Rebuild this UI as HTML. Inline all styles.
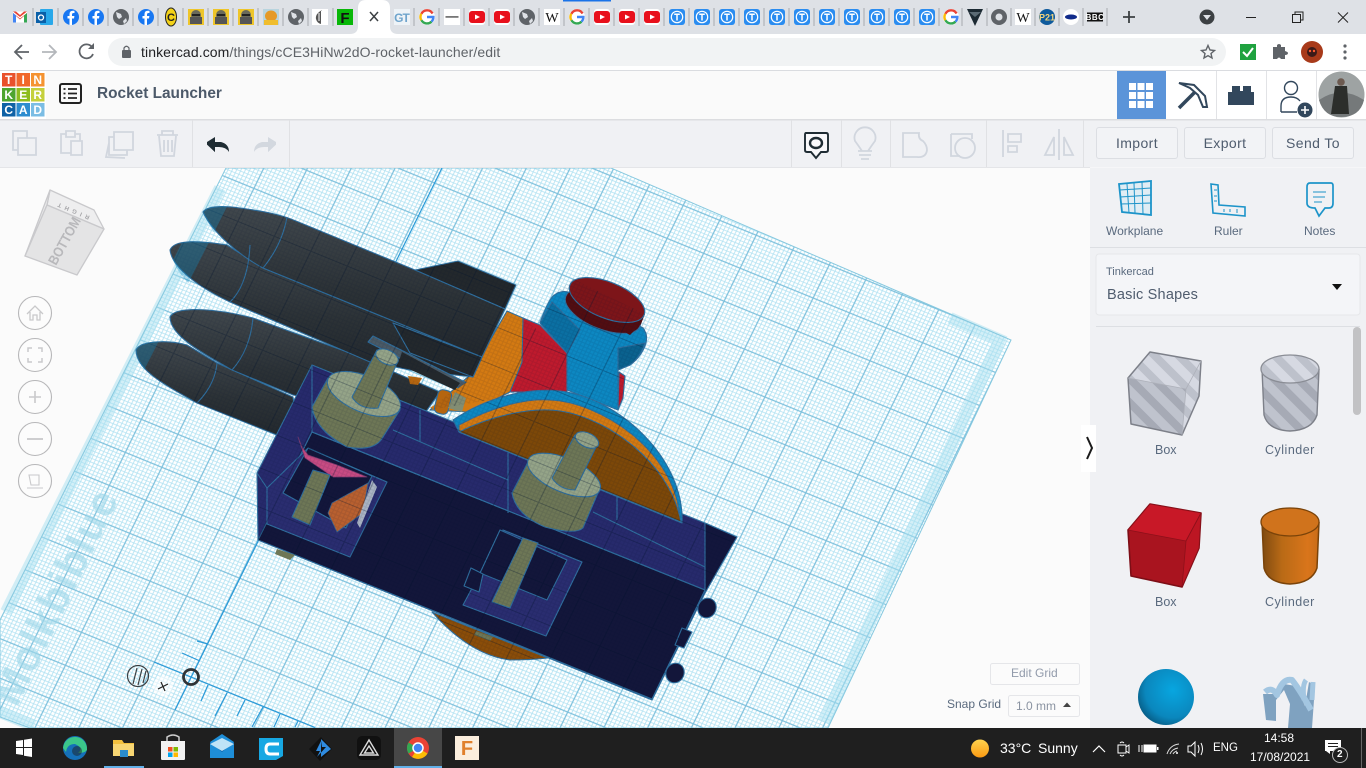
<!DOCTYPE html>
<html><head><meta charset="utf-8"><title>Rocket Launcher</title>
<style>
html,body{margin:0;padding:0;width:1366px;height:768px;overflow:hidden;background:#fbfbfb;font-family:"Liberation Sans",sans-serif}
svg{position:absolute;left:0;top:0}
.t{position:absolute;white-space:nowrap;line-height:1}
.btn{position:absolute;top:127px;height:30px;width:80px;border:1px solid #dcdee3;border-radius:3px;background:#f2f3f6;color:#4f5c6e;font-size:14px;line-height:30px;text-align:center;letter-spacing:.4px;box-sizing:content-box}
</style></head><body>
<svg width="1366" height="768" viewBox="0 0 1366 768" xmlns="http://www.w3.org/2000/svg" font-family="Liberation Sans, sans-serif">
<defs>
<pattern id="g" patternUnits="userSpaceOnUse" width="10" height="10" patternTransform="matrix(3.65 1.49 -1.607 3.3 191 677)">
<path d="M1 0V10M2 0V10M3 0V10M4 0V10M5 0V10M6 0V10M7 0V10M8 0V10M9 0V10M0 1H10M0 2H10M0 3H10M0 4H10M0 5H10M0 6H10M0 7H10M0 8H10M0 9H10" stroke="#b2e2f2" stroke-width=".22" fill="none"/>
<path d="M0 0V10M10 0V10M0 0H10M0 10H10" stroke="#7cc0dc" stroke-width=".32" fill="none"/>
</pattern>
<pattern id="gd" patternUnits="userSpaceOnUse" width="10" height="10" patternTransform="matrix(3.65 1.49 -1.607 3.3 191 677)">
<path d="M1 0V10M2 0V10M3 0V10M4 0V10M5 0V10M6 0V10M7 0V10M8 0V10M9 0V10M0 1H10M0 2H10M0 3H10M0 4H10M0 5H10M0 6H10M0 7H10M0 8H10M0 9H10" stroke="#00102a" stroke-opacity=".09" stroke-width=".28" fill="none"/>
<path d="M0 0V10M10 0V10M0 0H10M0 10H10" stroke="#00102a" stroke-opacity=".3" stroke-width=".3" fill="none"/>
</pattern>
<pattern id="st" patternUnits="userSpaceOnUse" width="17" height="17" patternTransform="rotate(-45)">
<rect width="17" height="17" fill="#bfc3cd"/><rect width="8" height="17" fill="#a6aab5"/>
</pattern>
<pattern id="st2" patternUnits="userSpaceOnUse" width="17" height="17" patternTransform="rotate(-45)">
<rect width="17" height="17" fill="#d6d9e2"/><rect width="8" height="17" fill="#bdc1cb"/>
</pattern>
<linearGradient id="rk" x1=".15" y1="0" x2="0" y2="1"><stop offset="0" stop-color="#41484d"/><stop offset=".5" stop-color="#2c3236"/><stop offset="1" stop-color="#1f2429"/></linearGradient>
<radialGradient id="sph" cx=".62" cy=".38" r=".7"><stop offset="0" stop-color="#08a6e0"/><stop offset=".7" stop-color="#0a87bd"/><stop offset="1" stop-color="#07587f"/></radialGradient>
<linearGradient id="cyl" x1="0" x2="1"><stop offset="0" stop-color="#7f4a10"/><stop offset=".35" stop-color="#b96a16"/><stop offset=".8" stop-color="#d9751b"/><stop offset="1" stop-color="#c96c18"/></linearGradient>
<clipPath id="objs">
<path d="M203 212C208 205 225 206 240 208C262 211 280 214 296 221L415 270L505 309L482 357L263 268C240 256 212 232 203 212Z"/>
<path d="M170 250C174 240 195 240 227 245L263 268L482 357L473 377L410 370L370 362L230 302C200 288 172 268 170 250Z"/>
<path d="M170 317C175 306 215 308 253 318L350 353L440 392L420 420L293 395L232 370C200 352 170 335 170 317Z"/>
<path d="M136 350C140 340 170 340 187 345L217 363L293 397L300 440L277 435L197 403C165 385 136 370 136 350Z"/>
<polygon points="415,270 458,261 516,285 505,309"/>
<polygon points="312,365 737,537 705,593 652,700 258,540 257,473"/>
<polygon points="507,311 525,320 567,353 567,392 490,400 430,410 470,375"/>
<path d="M540 323L553 295L573 279L645 314L648 340L633 363L618 370L625 376L623 398L618 410L567 390L567 353Z"/>
<path d="M453 420C490 395 530 388 560 391C620 398 685 460 682 523L459 432Z"/>
<path d="M432 612Q470 655 510 660Q530 660 548 658Z"/>
<path d="M377 350L352 397L397 363Z"/>
</clipPath>
<clipPath id="tips">
<path d="M203 212C208 205 225 206 240 208L240 260C225 250 212 232 203 212Z"/>
<path d="M170 250C174 240 195 240 227 245L190 285C180 275 172 262 170 250Z"/>
<path d="M136 350C140 340 170 340 180 344L160 385C148 375 136 362 136 350Z"/>
</clipPath>
</defs>

<!-- canvas -->
<rect x="0" y="168" width="1090" height="560" fill="#fbfbfb"/>
<polygon points="226,168 611,168 1011,340 828,728 30,728 0,717 0,620" fill="#fff"/>
<polygon points="226,168 611,168 1011,340 828,728 30,728 0,717 0,620" fill="url(#g)"/>
<path d="M220 188L6 612M0 712L34 726M998 344L824 722M950 318L1005 342" stroke="#a8dff0" stroke-opacity=".5" stroke-width="12" fill="none"/>
<polygon points="226,168 611,168 1011,340 828,728 30,728 0,717 0,620" fill="none" stroke="#86c8df" stroke-width="1"/>
<text transform="translate(17 708) rotate(-64)" font-size="42" font-weight="700" fill="#9ed6e9" fill-opacity=".62" letter-spacing="1.500">Molkbiblue</text>

<!-- axes -->
<g stroke="#2a9ad8" stroke-width="1.200" fill="none">
<path d="M154 662L315 727.500M442 168L175 710"/>
<path d="M208 685L201 701M227 693L215 716M245 700L237 716M263 707L252 727M280 714L274 727M298 721L295 727M182 653L200 661M197 641L208 644"/>
</g>
<circle cx="191" cy="677" r="7.500" fill="none" stroke="#2f3336" stroke-width="2.800"/>
<g fill="none" stroke="#3b3f42" stroke-width="1.200"><circle cx="138" cy="676" r="10.500"/><path d="M133 684L137 668M138 685L142 669M143 683L146 671"/></g>
<circle cx="163" cy="686" r="10" fill="#fff" fill-opacity=".55"/>
<path d="M158 689L168 684M161 682L165 691" stroke="#222" stroke-width="1.200"/>

<!-- objects -->
<g stroke="#2f6f9f" stroke-width="1.100" stroke-linejoin="round">
<polygon points="523,318 540,325 567,353 567,392 510,392" fill="#bf1a2d"/>
<polygon points="619,372 625,376 623,398 618,410" fill="#bf1a2d"/>
<polygon points="507,311 523,318 522,362 510,392 470,412 430,410 470,375" fill="#d47a12"/>
<path d="M540 323Q547 303 553 296Q560 290 568 292L643 328Q649 336 645 346Q640 358 630 365L618 370L618 410L567 390L567 353Z" fill="#0d88c2"/>
<polygon points="540,323 552,302 580,330 567,353" fill="#0b70a3"/>
<path d="M618 348L645 343Q640 358 630 365L618 370Z" fill="#0a628f"/>
<ellipse cx="603" cy="311" rx="40" ry="18" transform="rotate(22 603 311)" fill="#520d11"/>
<polygon points="567,300 571,287 645,314 641,324 630,335" fill="#520d11" stroke="none"/>
<ellipse cx="607" cy="300" rx="40" ry="18" transform="rotate(22 607 300)" fill="#7d1519"/>
<!-- rockets -->
<path d="M136 350C140 340 170 340 187 345L217 363L293 397L300 440L277 435L197 403C165 385 136 370 136 350Z" fill="url(#rk)"/>
<path d="M170 317C175 306 215 308 253 318L350 353L440 392L420 420L293 395L232 370C200 352 170 335 170 317Z" fill="url(#rk)"/>
<path d="M217 363Q215 385 197 403M253 318Q250 350 232 370" fill="none"/>
<polygon points="415,270 458,261 516,285 505,309" fill="#23282c"/>
<path d="M170 250C174 240 195 240 227 245L263 268L482 357L473 377L410 370L370 362L230 302C200 288 172 268 170 250Z" fill="url(#rk)"/>
<path d="M203 212C208 205 225 206 240 208C262 211 280 214 296 221L415 270L505 309L482 357L263 268C240 256 212 232 203 212Z" fill="url(#rk)"/>
<path d="M250 245Q248 285 230 302M287 217Q282 245 263 268" fill="none"/>
<polygon points="393,323 482,357 473,377 410,353" fill="#23282c"/>
<polygon points="368,342 373,336 467,383 462,390" fill="#4a5a66"/>
<polygon points="402,352 460,383 455,390 398,364" fill="#23282c" stroke="none"/>
<polygon points="470,380 490,395 470,412 430,408" fill="#d47a12" stroke="none"/>
<rect x="436" y="390" width="14" height="24" rx="5" transform="rotate(14 443 402)" fill="#b5650f"/>
<path d="M408 376L422 378L418 385L410 384Z" fill="#b5650f" stroke="none"/>
<polygon points="455,392 466,398 462,412 448,408" fill="#838d72" stroke="none"/>
<!-- orange lower disc -->
<path d="M432 612Q470 655 510 660Q530 660 548 658Z" fill="#8b4d08"/>
<!-- box -->
<polygon points="312,365 705,523 737,537 705,593 652,700 258,540 257,473" fill="#272a6c"/>
<polygon points="705,523 737,537 705,593" fill="#13163c"/>
<polygon points="312,432 705,590 652,699 258,540" fill="#13163a"/>
<!-- window 1 -->
<polygon points="308,448 387,482 350,557 267,524 267,488" fill="#2a2d70"/>
<polygon points="308,448 372,476 346,528 283,493" fill="#13163a"/>
<path d="M312 365L312 432M267 488L257 473M393 430L508 480M508 453V513M420 410V442M593 512L705 567M617 497V520M312 432L705 590" fill="none"/>
<path d="M298 437L305 458L333 477L367 477L337 465L308 455L302 447Z" fill="#c84b83" stroke="#7d3b70" stroke-width=".7"/>
<path d="M368 483L363 513L337 532L328 513L332 503L350 493Z" fill="#b9602f" stroke="#3d668f" stroke-width=".8"/>
<polygon points="372,480 377,487 360,528 357,523" fill="#aab4c4" stroke="none"/>
<polygon points="313,470 330,475 310,525 292,517" fill="#6e7756"/>
<!-- window 2 -->
<polygon points="503,530 582,562 546,636 463,605" fill="#2a2d70"/>
<polygon points="500,530 567,560 547,600 480,573" fill="#13163a"/>
<polygon points="471,568 483,574 479,592 464,586" fill="#13163a"/>
<polygon points="523,538 538,543 510,608 492,602" fill="#6e7756"/>
<!-- right end notches / knobs -->
<ellipse cx="707" cy="608" rx="9" ry="10" transform="rotate(25 707 608)" fill="#13163a"/>
<ellipse cx="675" cy="673" rx="9" ry="10" transform="rotate(25 675 673)" fill="#13163a"/>
<polygon points="682,628 692,632 684,648 675,645" fill="#13163a"/>
<polygon points="277,549 295,555 290,560 275,554" fill="#6e7756" stroke="none"/>
<polygon points="476,631 493,637 490,641 474,635" fill="#6e7756" stroke="none"/>
<!-- half disc -->
<path d="M453 420C490 395 530 388 560 391C620 398 685 460 682 523L459 432Z" fill="#0d88c2"/>
<path d="M459 425C495 405 530 398 550 400C600 402 675 450 680 518L459 432Z" fill="#d47a12"/>
<path d="M459 432C495 414 530 409 550 410C600 412 670 460 681 522Z" fill="#7d4808"/>
<!-- cylinders -->
<path d="M328 378L312 407Q315 430 347 447Q375 452 383 437L400 410Z" fill="#6e7756"/>
<ellipse cx="364" cy="394" rx="39" ry="18" transform="rotate(23 364 394)" fill="#95a488"/>
<path d="M377 350L352 397Q360 410 378 408L397 363Z" fill="#6e7756"/>
<ellipse cx="387" cy="357" rx="12" ry="7" transform="rotate(25 387 357)" fill="#95a488"/>
<path d="M528 462L512 493Q516 515 545 527Q575 535 583 528L600 488Z" fill="#6e7756"/>
<ellipse cx="564" cy="475" rx="39" ry="17" transform="rotate(23 564 475)" fill="#95a488"/>
<path d="M575 435L552 478Q560 490 575 490L598 443Z" fill="#6e7756"/>
<ellipse cx="587" cy="440" rx="12.500" ry="7" transform="rotate(25 587 440)" fill="#95a488"/>
</g>
<rect x="0" y="168" width="1090" height="560" fill="url(#gd)" clip-path="url(#objs)"/>
<path d="M222 190L8 612" stroke="#108cc2" stroke-opacity=".33" stroke-width="24" fill="none" clip-path="url(#tips)"/>

<!-- view cube -->
<g stroke="#c9c9cc" stroke-width="1.300" stroke-linejoin="round">
<polygon points="50,190 94,210 104,229 47,205" fill="#eeeeef"/>
<polygon points="50,190 47,205 25,256" fill="#eaeaeb"/>
<polygon points="47,205 104,229 77,275 25,256" fill="#e4e4e5"/>
</g>
<text transform="translate(56 266) rotate(-61)" font-size="14" font-weight="700" fill="#b8b8bb" textLength="52" lengthAdjust="spacingAndGlyphs">BOTTOM</text>
<text transform="translate(90 216) rotate(203)" font-size="6" font-weight="700" fill="#a5a5a8" textLength="34">RIGHT</text>
<!-- nav controls -->
<g fill="#fcfcfc" stroke="#b7b7b9" stroke-width="1.100"><circle cx="35" cy="313" r="16.500"/><circle cx="35" cy="355" r="16.500"/><circle cx="35" cy="397" r="16.500"/><circle cx="35" cy="439" r="16.500"/><circle cx="35" cy="481" r="16.500"/></g>
<g fill="none" stroke="#c9c9cb" stroke-width="1.300">
<path d="M27 314L35 306L43 314M30 312V320H33V315H37V320H40V312"/>
<path d="M28 352V348H32M38 348H42V352M42 358V362H38M32 362H28V358" stroke-width="1.500"/>
<path d="M29 397H41M35 391V403" stroke-width="1.600"/>
<path d="M27 439H43" stroke-width="1.800"/>
<path d="M27 488H43M29 475H39V485H31ZM29 475L31 485" stroke-width="1.100"/>
</g>

<!-- right panel -->
<rect x="1090" y="168" width="276" height="560" fill="#f0f1f4"/>
<rect x="1081" y="425" width="15" height="47" fill="#fff"/>
<path d="M1087 437L1092 448L1087 459" fill="none" stroke="#1b1b1b" stroke-width="2"/>
<!-- workplane -->
<g fill="none" stroke="#1d94c9">
<polygon points="1119,184 1151,181 1151,215 1122,212" stroke-width="1.800" fill="#cfe9f3" fill-opacity=".5"/>
<path d="M1119.500 190L1151 188M1120 197L1151 195M1120.500 204L1151 203M1127 184L1129 213M1134 183L1135 213M1142 182L1143 214" stroke-width="1"/>
<polygon points="1211,184 1218,185 1219,205 1245,207 1245,216 1213,213" stroke-width="1.600"/>
<path d="M1214 190H1217M1214 196H1217M1214 201H1217M1224 209V212M1230 209V212M1237 209V213" stroke-width="1"/>
<path d="M1310 183H1331Q1333 183 1333 186V203Q1333 208 1329 208H1325L1319 216L1315 208Q1307 208 1307 203V187Q1307 183 1310 183Z" stroke-width="1.700"/>
<path d="M1313 192H1326M1313 197H1325M1314 202H1322" stroke-width="1.100"/>
</g>
<path d="M1090 247.500H1366M1096 326.500H1360" stroke="#dddfe3" stroke-width="1"/>
<rect x="1096" y="254" width="264" height="61" rx="3" fill="#f4f5f8" stroke="#e6e7ea"/>
<polygon points="1332,284 1342,284 1337,290" fill="#111"/>
<rect x="1353" y="327" width="8" height="88" rx="4" fill="#c2c2c4"/>
<!-- shapes -->
<g stroke-linejoin="round">
<polygon points="1128,378 1150,352 1201,361 1199,396 1182,435 1131,424" fill="url(#st)"/>
<polygon points="1150,352 1201,361 1186,389 1128,378" fill="url(#st2)"/>
<polygon points="1186,389 1201,361 1199,396 1182,435" fill="url(#st2)"/>
<path d="M1128 378L1150 352L1201 361L1199 396L1182 435L1131 424Z" fill="none" stroke="#7d8089" stroke-width="1.500"/>
<path d="M1128 378L1186 389L1201 361M1186 389L1182 435" fill="none" stroke="#aeb1ba" stroke-width=".8"/>
<path d="M1262 369L1264 415Q1268 430 1290 431Q1312 430 1317 415L1319 369" fill="url(#st)" stroke="#7d8089" stroke-width="1.400"/>
<ellipse cx="1290" cy="369" rx="29" ry="14" fill="url(#st2)" stroke="#8a8d95" stroke-width="1.300"/>
<polygon points="1128,530 1150,504 1201,513 1199,548 1182,587 1131,576" fill="#a9141f" stroke="#7d0e16" stroke-width="1.600"/>
<polygon points="1150,504 1201,513 1186,541 1128,530" fill="#c81827" stroke="#8d101a" stroke-width=".8"/>
<polygon points="1186,541 1201,513 1199,548 1182,587" fill="#bc1623" stroke="#8d101a" stroke-width=".8"/>
<path d="M1262 522L1264 568Q1268 583 1290 584Q1312 583 1317 568L1319 522" fill="url(#cyl)" stroke="#7a4309" stroke-width="1.500"/>
<ellipse cx="1290" cy="522" rx="29" ry="14" fill="#d0731c" stroke="#7a4309" stroke-width="1.300"/>
<circle cx="1166" cy="697" r="28" fill="url(#sph)"/>
<path d="M1263 694L1266 720L1276 721L1276 700L1284 690L1290 704L1288 728H1312L1315 686L1309 682L1305 706L1296 686L1284 684L1276 694Z" fill="#7fa2c0"/>
<path d="M1265 692Q1272 686 1277 695Q1282 678 1292 680Q1300 690 1311 710" fill="none" stroke="#a3c6e1" stroke-width="6"/>
<path d="M1304 700Q1302 685 1306 680M1313 682L1312 700" fill="none" stroke="#a3c6e1" stroke-width="5"/>
</g>
<!-- bottom-right controls -->
<rect x="990.500" y="663.500" width="89" height="21" rx="2" fill="#fbfbfb" stroke="#e5e6e9"/>
<rect x="1008.500" y="695.500" width="71" height="21" rx="2" fill="#fbfbfb" stroke="#e5e6e9"/>
<polygon points="1063,707 1071,707 1067,702.500" fill="#444"/>
</svg>

<!-- top chrome -->
<svg width="1366" height="168" viewBox="0 0 1366 168" xmlns="http://www.w3.org/2000/svg" font-family="Liberation Sans, sans-serif">
<defs>
<g id="tt"><rect x="-8" y="-8" width="16" height="16" rx="3" fill="#2a8cf0"/><circle r="5.700" fill="none" stroke="#fff" stroke-width="1.200"/><path d="M-2.800 -2.800H2.800M0 -2.800V3.500" stroke="#fff" stroke-width="1.500"/></g>
<g id="fb"><circle r="8" fill="#1877f2"/><path d="M1 8V1.500H3L3.400 -1H1V-2.500Q1 -4 2.600 -4H3.500V-6.200H1.700Q-1.500 -6.200 -1.500 -2.800V-1H-3.500V1.500H-1.500V8Z" fill="#fff"/></g>
<g id="gl"><circle r="8" fill="#5f6368"/><path d="M-5 -5L0 -3L1 0L-2 2L-4 0ZM2 4L5 1L6 4L3 7Z" fill="#dee1e6"/></g>
<g id="yt"><rect x="-8" y="-8" width="16" height="16" rx="3" fill="#fff"/><rect x="-8" y="-6" width="16" height="12" rx="3" fill="#e8101c"/><path d="M-2 -2.500L3 0L-2 2.500Z" fill="#fff"/></g>
<g id="G"><circle r="8" fill="#fff"/><path d="M5.600 -3.500A6.400 6.400 0 0 0 -5.600 -3.200" fill="none" stroke="#ea4335" stroke-width="2.400"/><path d="M-5.700 -3.200A6.400 6.400 0 0 0 -5.600 3.300" fill="none" stroke="#fbbc05" stroke-width="2.400"/><path d="M-5.600 3.200A6.400 6.400 0 0 0 4.500 4.600" fill="none" stroke="#34a853" stroke-width="2.400"/><path d="M0 0H6.400A6.400 6.400 0 0 1 4.500 4.600" fill="none" stroke="#4285f4" stroke-width="2.400"/></g>
<g id="rb"><rect x="-8" y="-8" width="16" height="16" fill="#eec52a"/><circle cy="-2" r="5" fill="#6a6a5a"/><rect x="-6" y="0" width="12" height="7" fill="#555"/><rect x="-4" y="-3" width="8" height="2" fill="#222"/></g>
</defs>
<rect width="1366" height="34" fill="#dee1e6"/>
<rect x="563" y="0" width="48" height="1.500" fill="#1a73e8"/>
<rect y="34" width="1366" height="36" fill="#fff"/>
<rect y="70" width="1366" height="1" fill="#dadce0"/>
<rect x="108" y="38" width="1118" height="28" rx="14" fill="#f1f3f4"/>
<!-- separators -->
<path d="M33 8V26M58 8V26M83 8V26M108 8V26M133 8V26M158 8V26M183 8V26M208 8V26M233 8V26M258 8V26M283 8V26M308 8V26M333 8V26M414 8V26M439 8V26M464 8V26M489 8V26M514 8V26M539 8V26M564 8V26M589 8V26M614 8V26M639 8V26M664 8V26M689 8V26M714 8V26M739 8V26M764 8V26M789 8V26M814 8V26M839 8V26M864 8V26M889 8V26M914 8V26M939 8V26M962 8V26M987 8V26M1011 8V26M1035 8V26M1059 8V26M1083 8V26M1107 8V26" stroke="#a6a9ae" stroke-width="1"/>
<!-- active tab -->
<path d="M350 34Q358 34 358 26V8Q358 0 366 0H382Q390 0 390 8V26Q390 34 398 34Z" fill="#fff"/>
<path d="M370 12L378 21M378 12L370 21" stroke="#3c4043" stroke-width="1.500"/>
<!-- favicons -->
<g transform="translate(20 17)"><rect x="-7" y="-5.500" width="14" height="11" fill="#fff"/><path d="M-7 5.500V-4L0 1.500L7 -4V5.500H4V-1L0 2.500L-4 -1V5.500Z" fill="#ea4335"/><path d="M-7 5.500V-4L-4 -1.500V5.500Z" fill="#4285f4"/><path d="M7 5.500V-4L4 -1.500V5.500Z" fill="#34a853"/><path d="M-7 -5.500L0 0L7 -5.500L4 -5.500L0 -2L-4 -5.500Z" fill="#ea4335"/></g>
<g transform="translate(45 17)"><rect x="-5" y="-8" width="13" height="16" rx="1" fill="#28a8ea"/><rect x="-9" y="-5" width="10" height="11" fill="#0a5fa8"/><circle cx="-4" cy=".5" r="2.500" fill="none" stroke="#fff" stroke-width="1.300"/></g>
<use href="#fb" x="71" y="17"/><use href="#fb" x="96" y="17"/><use href="#gl" x="121" y="17"/><use href="#fb" x="146" y="17"/>
<g transform="translate(171 17)"><ellipse rx="5.500" ry="9" fill="#f3d21a" stroke="#222"/><text x="0" y="4" font-size="11" font-weight="700" text-anchor="middle" fill="#222">C</text></g>
<use href="#rb" x="196" y="17"/><use href="#rb" x="221" y="17"/><use href="#rb" x="246" y="17"/>
<g transform="translate(271 17)"><rect x="-8" y="-8" width="16" height="16" fill="#b8d4de"/><ellipse cy="-1" rx="6" ry="5.500" fill="#e59a28"/><rect x="-7" y="3" width="14" height="5" fill="#f0bd2e"/></g>
<use href="#gl" x="296" y="17"/>
<g transform="translate(320 17)"><rect x="-8" y="-8" width="16" height="16" fill="#fff"/><path d="M2 -7Q-5 -3 -4 2Q-3 6 1 7V-7Z" fill="#555"/><path d="M-1 -4V4" stroke="#fff"/></g>
<g transform="translate(345 17)"><rect x="-8" y="-8" width="16" height="16" fill="#08b708"/><text x="0" y="6" font-size="15" font-weight="700" text-anchor="middle" fill="#111">F</text></g>
<g transform="translate(402 17)"><rect x="-8" y="-8" width="16" height="16" fill="#eef3f7"/><text x="-.5" y="5" font-size="12" font-weight="700" text-anchor="middle" fill="#6fa4cc" letter-spacing="-1">GT</text></g>
<use href="#G" x="427" y="17"/>
<g transform="translate(452 17)"><rect x="-8" y="-8" width="16" height="16" fill="#fff"/><rect x="-6.500" y="-1" width="13" height="1.800" fill="#777"/></g>
<use href="#yt" x="477" y="17"/><use href="#yt" x="502" y="17"/><use href="#gl" x="527" y="17"/>
<g transform="translate(552 17)"><rect x="-8" y="-8" width="16" height="16" fill="#fff"/><text y="5" font-size="14" font-family="Liberation Serif" text-anchor="middle" fill="#111">W</text></g>
<use href="#G" x="577" y="17"/><use href="#yt" x="602" y="17"/><use href="#yt" x="627" y="17"/><use href="#yt" x="652" y="17"/>
<use href="#tt" x="677" y="17"/><use href="#tt" x="702" y="17"/><use href="#tt" x="727" y="17"/><use href="#tt" x="752" y="17"/><use href="#tt" x="777" y="17"/><use href="#tt" x="802" y="17"/><use href="#tt" x="827" y="17"/><use href="#tt" x="852" y="17"/><use href="#tt" x="877" y="17"/><use href="#tt" x="902" y="17"/><use href="#tt" x="927" y="17"/>
<use href="#G" x="951" y="17"/>
<path d="M967 9H983L975 26Z" fill="#1c2a33"/><path d="M969 12H981L975 17Z" fill="#5b6b75"/>
<circle cx="999" cy="17" r="8" fill="#5f6368"/><circle cx="999" cy="17" r="3.500" fill="#dee1e6"/>
<g transform="translate(1023 17)"><rect x="-8" y="-8" width="16" height="16" fill="#fff"/><text y="5" font-size="14" font-family="Liberation Serif" text-anchor="middle" fill="#111">W</text></g>
<g transform="translate(1047 17)"><circle r="8" fill="#0e5a9c"/><text y="3.500" font-size="9" font-weight="700" text-anchor="middle" fill="#f2d37a">P21</text></g>
<g transform="translate(1071 17)"><circle r="8" fill="#fff"/><ellipse rx="6" ry="2.500" fill="#102a8a"/><circle r="2" cy="-.5" fill="#102a8a"/></g>
<g transform="translate(1095 17)"><rect x="-8" y="-4.500" width="16" height="9" fill="#111"/><text y="3.200" font-size="8" font-weight="700" text-anchor="middle" fill="#fff" letter-spacing=".5">BBC</text></g>
<path d="M1129 11V23M1123 17H1135" stroke="#3c4043" stroke-width="1.800"/>
<circle cx="1207" cy="17" r="7.500" fill="#3c4043"/><path d="M1203 15H1211L1207 20Z" fill="#dee1e6"/>
<path d="M1246 17.500H1256" stroke="#222" stroke-width="1"/>
<path d="M1292.500 14.500H1300.500V22.500H1292.500ZM1295 14.500V12H1303V20H1300.500" fill="none" stroke="#222" stroke-width="1"/>
<path d="M1338 12.500L1348 22.500M1348 12.500L1338 22.500" stroke="#222" stroke-width="1"/>
<!-- address bar icons -->
<path d="M22 45L15 52L22 59M15 52H29" fill="none" stroke="#5f6368" stroke-width="1.800"/>
<path d="M49 45L56 52L49 59M56 52H42" fill="none" stroke="#b4b7bb" stroke-width="1.800"/>
<path d="M92 47A7 7 0 1 0 93 54" fill="none" stroke="#5f6368" stroke-width="1.800"/><path d="M94 43V49H88Z" fill="#5f6368"/>
<rect x="122" y="50" width="9" height="8" rx="1" fill="#5f6368"/><path d="M124 50V48Q126.500 44.500 129 48V50" fill="none" stroke="#5f6368" stroke-width="1.200"/>
<path d="M1208 45.500L1210 50L1214.500 50.500L1211 53.500L1212 58L1208 55.700L1204 58L1205 53.500L1201.500 50.500L1206 50Z" fill="none" stroke="#5f6368" stroke-width="1.400"/>
<rect x="1240" y="44" width="16" height="16" fill="#1fa23f"/><path d="M1243 52L1247 56L1253 48" fill="none" stroke="#fff" stroke-width="2"/>
<path d="M1273 47H1277V45Q1279 43 1281 45V47H1285V51Q1288 52 1288 53Q1288 55 1285 55V59H1281Q1279 56 1277 59H1273Z" fill="#5f6368"/>
<ellipse cx="1312" cy="52" rx="11" ry="11" fill="#a83a1a"/><circle cx="1312" cy="52" r="5" fill="#3b1a18"/><circle cx="1310" cy="51" r="1.200" fill="#ff5a30"/><circle cx="1314" cy="51" r="1.200" fill="#ff5a30"/>
<circle cx="1345" cy="46" r="1.600" fill="#5f6368"/><circle cx="1345" cy="52" r="1.600" fill="#5f6368"/><circle cx="1345" cy="58" r="1.600" fill="#5f6368"/>
<!-- tinkercad header -->
<rect y="71" width="1366" height="48" fill="#fafafa"/>
<rect y="119" width="1366" height="1.500" fill="#dcdde0"/>
<rect y="120.500" width="1366" height="47" fill="#f0f1f4"/>
<rect y="167" width="1090" height="1" fill="#e4e5e8"/>
<rect x="0" y="71" width="46" height="48" fill="#fff"/>
<g font-size="12" font-weight="700" fill="#fff" text-anchor="middle">
<rect x="2" y="73" width="13.500" height="13.500" fill="#e9512c"/><rect x="16.500" y="73" width="13.500" height="13.500" fill="#f1672a"/><rect x="31" y="73" width="13.500" height="13.500" fill="#f59331"/>
<rect x="2" y="88" width="13.500" height="13.500" fill="#4ea52f"/><rect x="16.500" y="88" width="13.500" height="13.500" fill="#8dbd1f"/><rect x="31" y="88" width="13.500" height="13.500" fill="#c5d03c"/>
<rect x="2" y="103" width="13.500" height="13.500" fill="#0f62a6"/><rect x="16.500" y="103" width="13.500" height="13.500" fill="#2c8ccf"/><rect x="31" y="103" width="13.500" height="13.500" fill="#7bbde4"/>
<text x="8.700" y="84">T</text><text x="23.200" y="84">I</text><text x="37.700" y="84">N</text><text x="8.700" y="99">K</text><text x="23.200" y="99">E</text><text x="37.700" y="99">R</text><text x="8.700" y="114">C</text><text x="23.200" y="114">A</text><text x="37.700" y="114">D</text>
</g>
<rect x="60" y="84" width="21" height="19" rx="2" fill="none" stroke="#222" stroke-width="2"/>
<path d="M63.500 89H65.500M68 89H77M63.500 93.500H65.500M68 93.500H77M63.500 98H65.500M68 98H77" stroke="#222" stroke-width="1.800"/>
<rect x="1117" y="71" width="49" height="48" fill="#5b94d9"/>
<g fill="#fff"><rect x="1129" y="83" width="7" height="7"/><rect x="1137.500" y="83" width="7" height="7"/><rect x="1146" y="83" width="7" height="7"/><rect x="1129" y="92" width="7" height="7"/><rect x="1137.500" y="92" width="7" height="7"/><rect x="1146" y="92" width="7" height="7"/><rect x="1129" y="101" width="7" height="7"/><rect x="1137.500" y="101" width="7" height="7"/><rect x="1146" y="101" width="7" height="7"/></g>
<rect x="1166" y="71" width="200" height="48" fill="#fff"/>
<path d="M1216.500 71V119M1266.500 71V119M1316.500 71V119" stroke="#e2e3e6"/>
<path d="M1179 83L1194 85L1205 96L1207 107L1203 107L1198 95L1190 88Z" fill="none" stroke="#32475c" stroke-width="2"/>
<path d="M1195 92L1179 108" stroke="#32475c" stroke-width="3.500"/>
<path d="M1228 92H1232V86H1240V91H1243V86H1251V92H1254V105H1228Z" fill="#32475c"/>
<circle cx="1291" cy="88" r="6.500" fill="none" stroke="#32475c" stroke-width="1.400"/>
<path d="M1281 112V106Q1281 97 1291 97Q1297 97 1300 101M1281 112H1297" fill="none" stroke="#32475c" stroke-width="1.400"/>
<circle cx="1305" cy="110" r="7.500" fill="#32475c"/><path d="M1301 110H1309M1305 106V114" stroke="#fff" stroke-width="1.600"/>
<ellipse cx="1341.500" cy="94.500" rx="23" ry="23" fill="#9ea3a3"/><path d="M1319 100Q1341 85 1364 100Q1360 117 1341 117Q1324 117 1319 100Z" fill="#75797a"/>
<path d="M1335 86H1347L1349 114H1331Z" fill="#2c2e2b"/><circle cx="1341" cy="82" r="3.800" fill="#6c5a50"/>
<!-- toolbar -->
<path d="M192.500 120V167M289.500 120V167M791.500 120V167M841.500 120V167M890.500 120V167M986.500 120V167M1083.500 120V167" stroke="#e0e1e4"/>
<g fill="none" stroke="#d1d6de" stroke-width="1.800">
<path d="M18 138H36V155H18ZM18 150H13V131H27V138"/>
<path d="M66 134H61V153H71M80 141V134H75M66 131H75V137H66ZM71 141H82V155H71Z"/>
<path d="M114 132H133V150H114ZM114 137H109V155H127V150M109 143L106 157L125 158"/>
<path d="M157 135H178M162 135V131H173V135M159 136L161 156H174L176 136M164 140V152M168 140V152M172 140V152"/>
<path d="M858 151H872M859 155H871M861 159H869M862 151Q858 145 855 141A10.500 10.500 0 1 1 875 141Q872 145 868 151"/>
<path d="M903 133H919Q918 139 923 141Q927 145 927 150Q926 158 917 157H903Z"/>
<path d="M951 134H972V139M951 134V156H960"/><circle cx="965" cy="148" r="10"/>
<path d="M1003 130V157M1008 134H1021V142H1008ZM1008 146H1017V152H1008Z"/>
<path d="M1059 129V160M1054 137V155H1045ZM1064 137V155H1073Z"/>
</g>
<path d="M207 142H221Q229 144 229 152Q226 147 219 147H215V152L207 144.500Z" fill="#1f2c33"/><path d="M207 142L215 137V152L207 144.500Z" fill="#1f2c33"/>
<path d="M276 142H262Q254 144 254 152Q257 147 264 147H268V152L276 144.500Z" fill="#d3d8df"/><path d="M276 142L268 137V152L276 144.500Z" fill="#d3d8df"/>
<path d="M806 133Q805 133 805 135V150Q805 152 807 152H811L816 158L821 152H826Q828 152 828 150V135Q828 133 826 133Z" fill="#f9f9fb" stroke="#1f2c33" stroke-width="1.900"/>
<ellipse cx="816" cy="143" rx="6" ry="5" fill="none" stroke="#1f2c33" stroke-width="2.400"/>
</svg>

<!-- taskbar -->
<svg style="top:728px" width="1366" height="40" viewBox="0 728 1366 40" xmlns="http://www.w3.org/2000/svg" font-family="Liberation Sans, sans-serif">
<defs><linearGradient id="sun2" x1="0" y1="0" x2="0" y2="1"><stop offset="0" stop-color="#ffd34f"/><stop offset="1" stop-color="#fb9a12"/></linearGradient></defs>
<rect y="728" width="1366" height="40" fill="#1f1f1f"/>
<rect x="394" y="728" width="48" height="40" fill="#474747"/>
<rect x="104" y="766" width="40" height="2" fill="#62b0e8"/><rect x="394" y="766" width="48" height="2" fill="#62b0e8"/>
<path d="M16 741L23 740V747H16ZM24 739.800L32 738.500V747H24ZM16 748H23V755L16 754ZM24 748H32V757L24 755.800Z" fill="#fff"/>
<circle cx="75" cy="748" r="12" fill="#1570b8"/><path d="M63 748A12 12 0 0 1 87 750Q85 753 78 753Q84 748 75 744Q67 744 66 752Z" fill="#3bc68a"/><circle cx="77" cy="751" r="5" fill="#1f1f1f" opacity=".5"/>
<path d="M113 740H122L124 743H134V756H113Z" fill="#f2c03e"/><rect x="113" y="744" width="21" height="12" fill="#f7d673"/><rect x="120" y="750" width="8" height="7" fill="#2b8ccc"/>
<path d="M161 741H185V759Q185 760 183 760H163Q161 760 161 759Z" fill="#f2f2f2"/><path d="M167 741V737Q173 733 179 737V741" fill="none" stroke="#ccc" stroke-width="1.500"/>
<rect x="168" y="747" width="4.500" height="4.500" fill="#f25022"/><rect x="173.500" y="747" width="4.500" height="4.500" fill="#7fba00"/><rect x="168" y="752.500" width="4.500" height="4.500" fill="#00a4ef"/><rect x="173.500" y="752.500" width="4.500" height="4.500" fill="#ffb900"/>
<path d="M210 742L222 734L234 742V758H210Z" fill="#1e8ed8"/><path d="M210 742L222 752L234 742V744H210Z" fill="#0c64ad"/><path d="M210 744L222 751L234 744L222 738Z" fill="#bfe3f7"/>
<path d="M259 738H283V756L276 760H259V744Z" fill="#17a8e3"/><path d="M279 744H270Q266 744 266 749Q266 754 270 754H279" fill="none" stroke="#fff" stroke-width="3"/>
<path d="M321 737L332 749L320 761L309 749Z" fill="#111"/><path d="M321 739L331 749L321 757ZM321 741L316 751H320L317 757L326 747H322Z" fill="#2f8be0"/>
<rect x="357" y="736" width="24" height="24" rx="5" fill="#111"/><path d="M369 740L378 755H360ZM369 746L373.500 753H364.500Z" fill="none" stroke="#ddd" stroke-width="1.400"/>
<circle cx="418" cy="748" r="11" fill="#ea4335"/><path d="M418 748L427.500 753.500A11 11 0 0 1 412 757Z" fill="#fbbc05"/><path d="M418 748L408.500 753.500A11 11 0 0 1 408.500 742.500Z" fill="#34a853"/><circle cx="418" cy="748" r="5" fill="#4285f4" stroke="#fff" stroke-width="1.500"/>
<rect x="455" y="736" width="24" height="24" fill="#fbeedd"/><text x="467" y="755" font-size="20" font-weight="700" text-anchor="middle" fill="#e0802b">F</text>
<circle cx="980" cy="748.500" r="9" fill="url(#sun2)"/>
<path d="M1093 752L1099 746L1105 752" fill="none" stroke="#fff" stroke-width="1.200"/>
<rect x="1118" y="745" width="8" height="8" fill="none" stroke="#fff" stroke-width="1"/><path d="M1126 747L1129 745V753L1126 751M1120 743Q1122 741 1124 743M1120 755Q1122 757 1124 755" fill="none" stroke="#fff"/>
<rect x="1144" y="745" width="12" height="7" fill="#fff" stroke="#fff"/><path d="M1139 745V752M1142 745V752" stroke="#fff"/><rect x="1157" y="747" width="1.500" height="3" fill="#fff"/>
<path d="M1167 754Q1170 745 1179 744M1170 754Q1172 749 1178 748M1173 754Q1174 752 1177 751" fill="none" stroke="#ddd"/><circle cx="1177" cy="753" r="1" fill="#fff"/>
<path d="M1188 746H1191L1195 742V756L1191 752H1188ZM1198 745Q1200 749 1198 753M1201 743Q1204 749 1201 755" fill="none" stroke="#fff"/>
<path d="M1325 740H1341V751H1330V754L1326 751H1325Z" fill="#fff"/><path d="M1328 743.500H1338M1328 746.500H1338" stroke="#1f1f1f"/>
<circle cx="1340" cy="755" r="7.500" fill="#1f1f1f" stroke="#bbb"/>
<rect x="1361" y="728" width="1" height="40" fill="#666"/>
</svg>

<!-- HTML text -->
<div class="t" style="left:141px;top:45px;font-size:14px;color:#202124;letter-spacing:.1px">tinkercad.com<span style="color:#5f6368">/things/cCE3HiNw2dO-rocket-launcher/edit</span></div>
<div class="t" style="left:97px;top:86px;font-size:15.400px;font-weight:700;color:#4c5969">Rocket Launcher</div>
<div class="btn" style="left:1096px">Import</div>
<div class="btn" style="left:1184px">Export</div>
<div class="btn" style="left:1272px">Send To</div>
<div class="t" style="left:1106px;top:225px;font-size:12px;color:#5a6a7e">Workplane</div>
<div class="t" style="left:1214px;top:225px;font-size:12px;color:#5a6a7e">Ruler</div>
<div class="t" style="left:1304px;top:225px;font-size:12px;color:#5a6a7e">Notes</div>
<div class="t" style="left:1106px;top:267px;font-size:11px;color:#5a6a7e">Tinkercad</div>
<div class="t" style="left:1107px;top:288px;font-size:14.500px;color:#4f5c6e;letter-spacing:.2px">Basic Shapes</div>
<div class="t" style="left:1155px;top:444px;font-size:12.500px;color:#5a6a7e">Box</div>
<div class="t" style="left:1265px;top:444px;font-size:12.500px;letter-spacing:.5px;color:#5a6a7e">Cylinder</div>
<div class="t" style="left:1155px;top:596px;font-size:12.500px;color:#5a6a7e">Box</div>
<div class="t" style="left:1265px;top:596px;font-size:12.500px;letter-spacing:.5px;color:#5a6a7e">Cylinder</div>
<div class="t" style="left:1011px;top:667px;font-size:12px;color:#929bab">Edit Grid</div>
<div class="t" style="left:947px;top:698px;font-size:12px;color:#5a6a7e">Snap Grid</div>
<div class="t" style="left:1016px;top:700px;font-size:12px;color:#8a93a1">1.0 mm</div>
<div class="t" style="left:1000px;top:741px;font-size:14px;color:#fff">33°C</div>
<div class="t" style="left:1038px;top:741px;font-size:14px;color:#fff">Sunny</div>
<div class="t" style="left:1213px;top:743px;font-size:11.500px;color:#fff">ENG</div>
<div class="t" style="left:1264px;top:732px;font-size:12px;color:#fff">14:58</div>
<div class="t" style="left:1250px;top:751px;font-size:12px;color:#fff">17/08/2021</div>
<div class="t" style="left:1337px;top:750px;font-size:10px;font-weight:700;color:#fff">2</div>
</body></html>
